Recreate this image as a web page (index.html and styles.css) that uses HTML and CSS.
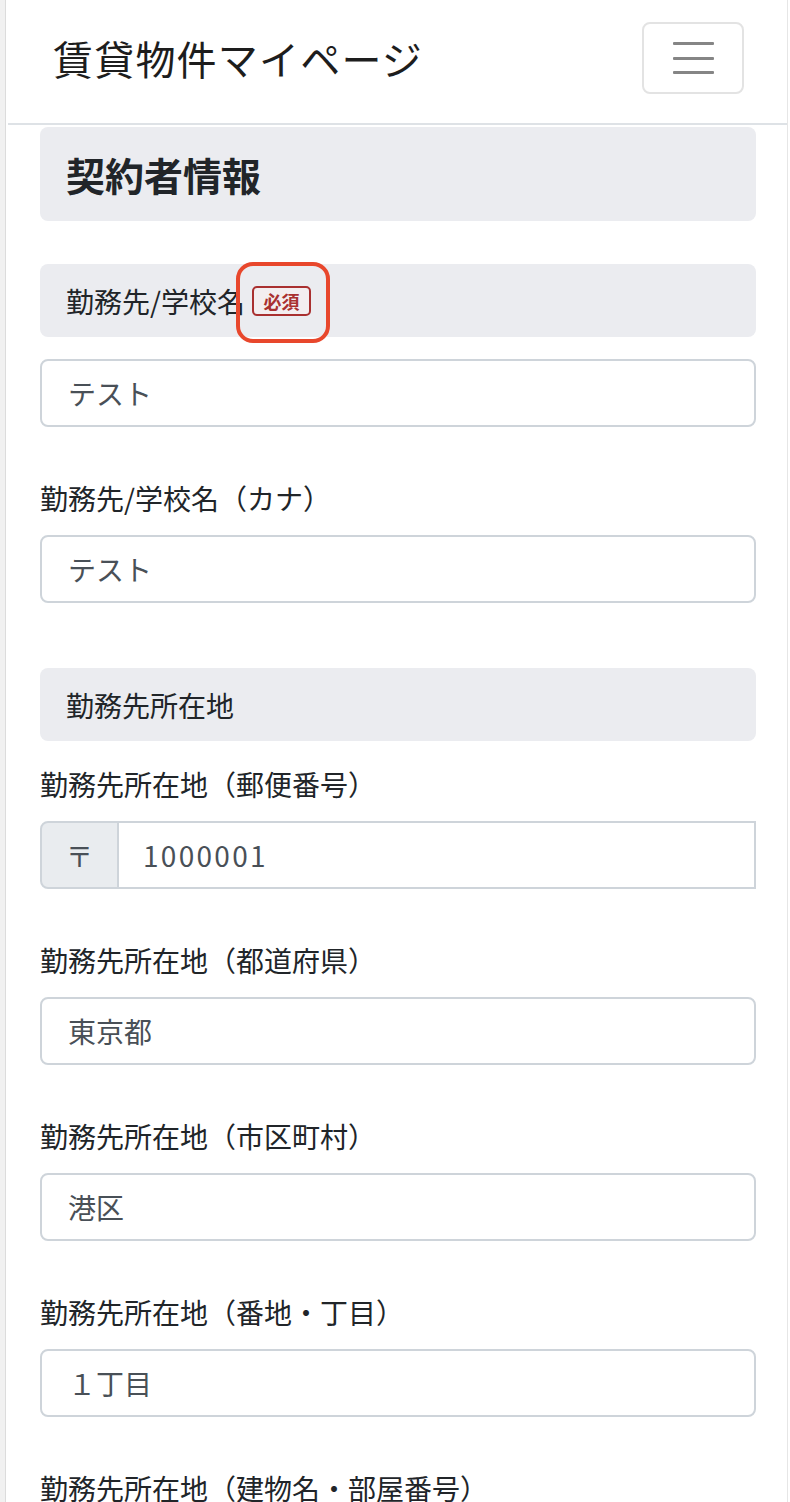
FILE: index.html
```html
<!DOCTYPE html>
<html lang="ja">
<head>
<meta charset="utf-8">
<title>賃貸物件マイページ</title>
<link rel="stylesheet" href="styles.css">
</head>
<body>
<div class="gutter"></div>
<div class="page">
  <header class="navbar">
    <div class="brand">賃貸物件マイページ</div>
    <button class="toggler" type="button" aria-label="menu">
      <span class="bar"></span><span class="bar"></span><span class="bar"></span>
    </button>
  </header>
  <main class="content">
    <h2 class="section-title">契約者情報</h2>

    <div class="label-box first">勤務先/学校名<span class="badge-wrap"><span class="badge">必須</span><span class="highlight"></span></span></div>
    <div class="field gap-s">テスト</div>

    <div class="label">勤務先/学校名（カナ）</div>
    <div class="field">テスト</div>

    <div class="label-box sub">勤務先所在地</div>

    <div class="label gap-s">勤務先所在地（郵便番号）</div>
    <div class="input-group">
      <div class="prefix">〒</div>
      <div class="group-field">1000001</div>
    </div>

    <div class="label">勤務先所在地（都道府県）</div>
    <div class="field">東京都</div>

    <div class="label">勤務先所在地（市区町村）</div>
    <div class="field">港区</div>

    <div class="label">勤務先所在地（番地・丁目）</div>
    <div class="field">１丁目</div>

    <div class="label last">勤務先所在地（建物名・部屋番号）</div>
  </main>
</div>
</body>
</html>
```

FILE: styles.css
```css
* { box-sizing: border-box; }
html, body {
  margin: 0;
  padding: 0;
  background: #ffffff;
}
body {
  display: flex;
  min-height: 1502px;
  font-family: "Noto Sans CJK JP", "Noto Sans", sans-serif;
  color: #212529;
}
.gutter {
  width: 5px;
  flex: none;
  background: #f1f1f1;
}
.page {
  width: 783px;
  flex: none;
  border-left: 1px solid #dcdcdc;
  border-right: 1px solid #e6e6e6;
  overflow: hidden;
}
.navbar {
  height: 125px;
  margin-left: 2px;
  border-bottom: 2px solid #dee2e6;
  display: flex;
  align-items: center;
  justify-content: space-between;
  padding: 0 43px 0 45px;
}
.brand {
  font-size: 40px;
  line-height: 48px;
  font-weight: 400;
  color: #1d1d1d;
  letter-spacing: 1.2px;
  margin-top: -8px;
}
.toggler {
  width: 102px;
  height: 72px;
  border: 2px solid #e3e3e3;
  border-radius: 8px;
  background: #fff;
  display: flex;
  flex-direction: column;
  align-items: center;
  justify-content: center;
  gap: 11.5px;
  padding: 0;
  margin-top: -7px;
}
.toggler .bar {
  display: block;
  width: 41px;
  height: 3px;
  border-radius: 1px;
  background: #858585;
}
.content {
  display: flex;
  flex-direction: column;
  padding: 0 31px 0 34px;
}
.section-title {
  margin: 2px 0 0;
  height: 94px;
  display: flex;
  align-items: center;
  padding: 0 26px;
  background: #ebecf0;
  border-radius: 8px;
  font-size: 39px;
  font-weight: 700;
  color: #212529;
}
.label-box {
  height: 73px;
  display: flex;
  align-items: center;
  padding: 0 26px;
  background: #ebecf0;
  border-radius: 8px;
  font-size: 28px;
  color: #212529;
}
.label-box.first { margin-top: 43px; }
.label-box.sub { margin-top: 65px; }
.badge-wrap {
  position: relative;
  display: inline-flex;
  margin-left: 7px;
}
.badge {
  display: inline-flex;
  align-items: center;
  justify-content: center;
  width: 59px;
  height: 30px;
  border: 2px solid #a93030;
  border-radius: 5px;
  color: #a93030;
  font-size: 18px;
  font-weight: 700;
  line-height: 1;
  background: #f3eef0;
}
.highlight {
  position: absolute;
  left: -16px;
  top: -24px;
  width: 94px;
  height: 81px;
  border: 4px solid #e8472c;
  border-radius: 17px;
}
.label {
  margin-top: 50px;
  margin-bottom: 16px;
  font-size: 28px;
  line-height: 42px;
  color: #212529;
}
.label.gap-s { margin-top: 22px; }
.label.last { margin-bottom: 0; }
.field {
  height: 68px;
  border: 2px solid #ced4da;
  border-radius: 8px;
  display: flex;
  align-items: center;
  padding: 0 26px;
  font-size: 28px;
  color: #495057;
  background: #fff;
}
.field.gap-s { margin-top: 22px; }
.input-group {
  display: flex;
  height: 68px;
}
.prefix {
  width: 79px;
  flex: none;
  display: flex;
  align-items: center;
  justify-content: center;
  background: #e9ecef;
  border: 2px solid #ced4da;
  border-radius: 8px 0 0 8px;
  font-size: 27px;
  color: #495057;
}
.group-field {
  flex: 1;
  display: flex;
  align-items: center;
  padding: 0 24px;
  border: 2px solid #ced4da;
  border-left: none;
  font-size: 28px;
  color: #495057;
  letter-spacing: 2.3px;
}
```
